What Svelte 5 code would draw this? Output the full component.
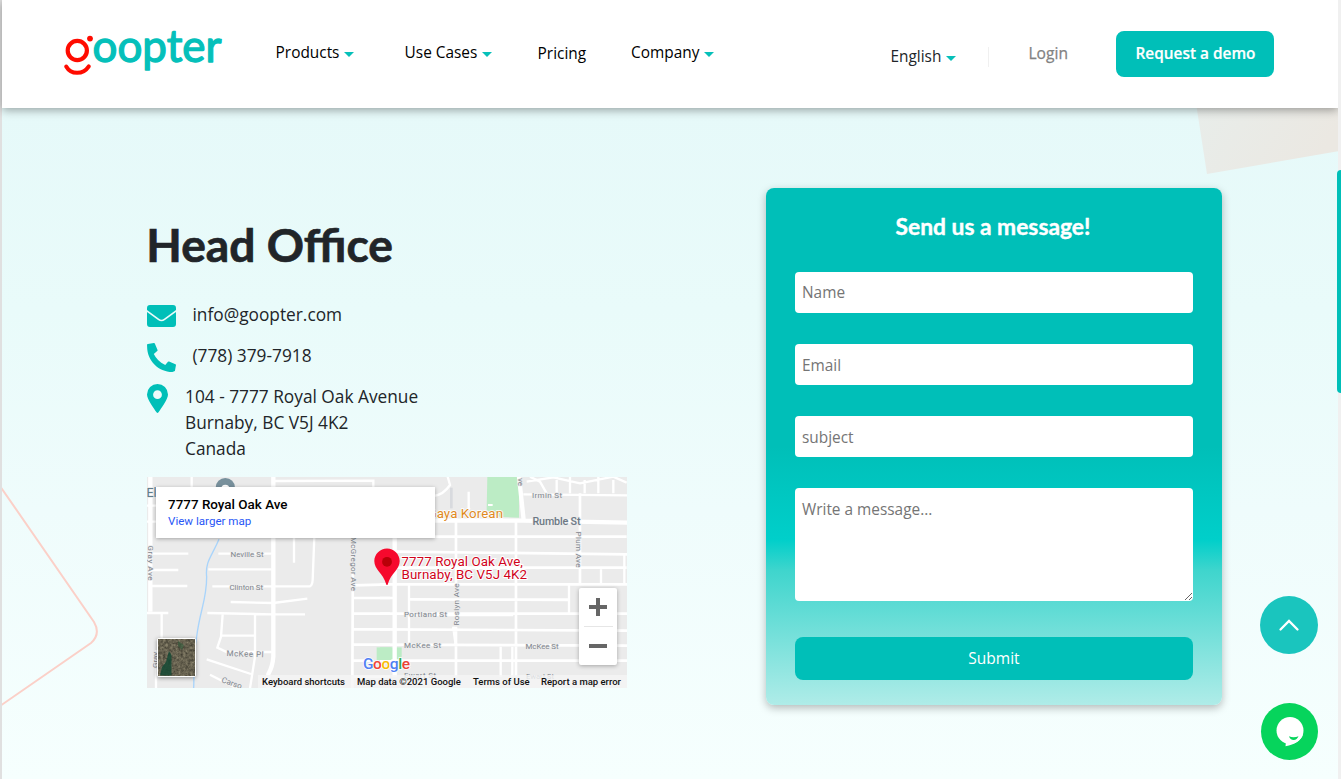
<script>
  const menu = [
    { label: 'Products', caret: true, width: 129 },
    { label: 'Use Cases', caret: true, width: 133 },
    { label: 'Pricing', caret: false, width: 93.5 },
    { label: 'Company', caret: true, width: 90 }
  ];
  const fields = ['Name', 'Email', 'subject'];
</script>

<div class="page">
  <header>
    <svg class="logo" width="160" height="46" viewBox="0 0 160 46" role="img" aria-label="goopter">
      <g fill="none" stroke="#ff0b00" stroke-linecap="round">
        <circle cx="14.3" cy="20.5" r="9.6" stroke-width="4.2" />
        <path d="M3.200 36.500C8 45 20 45 25.800 36.300" stroke-width="4" />
      </g>
      <circle cx="27" cy="8.6" r="2.9" fill="#ff0b00" />
      <text x="29.5" y="31.800" textLength="129" lengthAdjust="spacingAndGlyphs">oopter</text>
    </svg>
    <nav>
      {#each menu as item}
        <a class:plain={!item.caret} style="width:{item.width}px">{item.label}{#if item.caret}<i class="caret"></i>{/if}</a>
      {/each}
    </nav>
    <span class="lang">English<i class="caret"></i></span>
    <span class="rule"></span>
    <span class="login">Login</span>
    <button class="demo">Request a demo</button>
  </header>

  <main>
    <svg class="decor" width="1336" height="671" viewBox="2 108 1336 671">
      <defs>
        <linearGradient id="sq" x1="0" y1="0" x2="1" y2="0.3">
          <stop offset="0" stop-color="#e8edea" /><stop offset="1" stop-color="#ebe8e2" />
        </linearGradient>
      </defs>
      <path d="M1195.500 100L1207 174L1340 151V100Z" fill="url(#sq)" />
      <path d="M0 486L94 622Q101 634 91 643L0 706" fill="none" stroke="#fbd0c8" stroke-width="2" />
    </svg>

    <section class="office">
      <h1>Head Office</h1>
      <div class="row">
        <svg width="29" height="22" viewBox="0 0 29 22"><path fill="#00bfb8" d="M3 0H26A3 3 0 0 1 29 3V5L17 13.800Q14.500 15.500 12 13.800L0 5V3A3 3 0 0 1 3 0ZM0 7L11 15Q14.500 17.500 18 15L29 7V19A3 3 0 0 1 26 22H3A3 3 0 0 1 0 19Z" /></svg>
        <span>info@goopter.com</span>
      </div>
      <div class="row phone">
        <svg width="29" height="29" viewBox="0 0 512 512"><path fill="#00bfb8" d="M493 495L471 504Q460 510 448 510C200 510 2 310 2 64Q2 50 0 30Q2 20 16 16L120 0Q133-1 138 10L186 122Q190 134 180 143L120 192C155 265 220 340 322 390L370 331Q378 322 390 326L502 374Q514 380 511 392L493 495Z" /></svg>
        <span>(778) 379-7918</span>
      </div>
      <div class="row place">
        <svg width="21" height="29" viewBox="0 0 21 29"><path fill="#00bfb8" fill-rule="evenodd" d="M10.500 0A10.500 10.500 0 0 1 21 10.500C21 15.500 14 24.500 11.500 28.300Q10.500 29.500 9.500 28.300C7 24.500 0 15.500 0 10.500A10.500 10.500 0 0 1 10.500 0ZM10.500 6.300A4.400 4.400 0 1 0 10.500 15.100A4.400 4.400 0 1 0 10.500 6.300Z" /></svg>
        <address>104 - 7777 Royal Oak Avenue<br />Burnaby, BC V5J 4K2<br />Canada</address>
      </div>

      <div class="map">
        <svg class="tiles" width="480" height="211" viewBox="0 0 480 211">
          <rect width="480" height="211" fill="#ebebeb" />
          <g transform="translate(-7 -7) scale(.33333)">
            <g class="road">
              <path class="main" d="M400 20V560Q398 590 385 612V655" />
              <path class="main" d="M31 20V425" />
              <path d="M155 20V60M20 107H60M20 155H60M35 251H145M35 300H115M35 348H142M20 429H85M65 429V510M48 540V655" />
              <path d="M235 251H395M205 298H395M217 349H510Q517 345 518 330L523 200M272 396L400 399L502 386M202 429L395 433H495M248 433L243 500L232 533L260 546H395M245 497H343M345 435V560L330 655M200 568L333 612M210 614L290 655M462 200V278M400 33L700 32V60" />
              <path class="mid" d="M639 190L637 655M640 346L750 343M640 384H750M640 431H750M640 478H750M640 524H750M640 572H700M640 620H750" />
            </g>
            <path d="M237 208C215 260 195 275 200 320C200 390 180 420 170 500C160 550 163 600 161 655" fill="none" stroke="#a9d4fb" stroke-width="4" />
            <rect x="710" y="532" width="75" height="40" fill="#bcecc5" />
            <circle cx="256" cy="53" r="29" fill="#78909c" /><circle cx="256" cy="56" r="12" fill="#fff" />
          </g>
          <g transform="translate(233 -7) scale(.33333)">
            <path d="M322 20H417V143L360 141L320 120Z" fill="#bcecc5" />
            <rect x="324" y="102" width="14" height="6" fill="#fff" />
            <g class="road">
              <path class="main" d="M44 195V620" />
              <path class="main" d="M417 20L431 150M160 152H430L745 158" />
              <path class="mid" d="M0 200H445M45 245L745 253M45 293H740M0 343H745M0 384H45M90 388L565 390M0 431H745M90 389H565M0 478L745 482M0 524L745 527M0 572H745M228 155V340M228 470V620M408 155V620M600 70V340M430 200H740M220 470L228 530" />
              <path d="M87 343V520M567 343V435M362 530V620M397 530V620M663 298V343M733 253V340M90 435H400M160 78Q190 75 210 45L203 20M266 65V120M430 73L745 76M440 35L520 22L600 40L700 20L740 38M450 20L480 35L500 70M530 20V73M570 20V70M614 30V70M655 20V70M700 30V70" />
            </g>
            <path d="M214 53V115" stroke="#d8dade" stroke-width="8" />
            <rect x="0" y="532" width="34" height="38" fill="#bcecc5" />
          </g>
          <g class="street">
            <text x="83.500" y="79.500" textLength="33">Neville St</text>
            <text x="82.500" y="112.500" textLength="33.500">Clinton St</text>
            <text x="79.500" y="179" textLength="37" transform="rotate(2 80 178)">McKee Pl</text>
            <text x="74" y="205" transform="rotate(20 74 205)">Carso</text>
            <text x="257" y="140" textLength="43">Portland St</text>
            <text x="257" y="171" textLength="37">McKee St</text>
            <text x="378.500" y="171.500" textLength="33">McKee St</text>
            <text x="257" y="201" textLength="32">Ewart St</text>
            <text x="379" y="202" textLength="28">Ewart St</text>
            <text x="385" y="21" textLength="30">Irmin St</text>
            <text transform="translate(.5 68.500) rotate(90)" textLength="35">Gray Ave</text>
            <text transform="translate(204 60) rotate(90)" textLength="54">McGregor Ave</text>
            <text transform="translate(311.500 148.500) rotate(-90)" textLength="42">Roslyn Ave</text>
            <text transform="translate(429 54.500) rotate(90)" textLength="36">Plum Ave</text>
            <text transform="translate(371 1) rotate(90)">ve</text>
            <text transform="translate(10.500 191) rotate(-90)">Gray</text>
            <text class="big" x="385.500" y="47.500" textLength="48">Rumble St</text>
            <text class="el" x="-.5" y="19.500">El</text>
          </g>
          <text class="food" x="280.500" y="41" textLength="75.500">Gaya Korean</text>
          <path d="M240 71.500C246.900 71.500 252.700 77.200 252.700 84C252.700 93 244 95.500 240.700 107.500Q240 108.700 239.300 107.500C236 95.500 227.300 93 227.300 84C227.300 77.200 233.100 71.500 240 71.500Z" fill="#f6092d" />
          <circle cx="240" cy="84.800" r="4.900" fill="#b90008" />
          <g class="dest"><text x="254.500" y="88.500" textLength="121.500">7777 Royal Oak Ave,</text><text x="254.500" y="102" textLength="125.500">Burnaby, BC V5J 4K2</text></g>
          <text class="google" x="216" y="191.500" textLength="47"><tspan fill="#5181f4">G</tspan><tspan fill="#f04438">o</tspan><tspan fill="#f9bc05">o</tspan><tspan fill="#4d80f4">g</tspan><tspan fill="#34a853">l</tspan><tspan fill="#ea4335">e</tspan></text>
        </svg>
        <div class="card"><b>7777 Royal Oak Ave</b><span>View larger map</span></div>
        <div class="zoom"><i class="plus"></i><i class="minus"></i></div>
        <svg class="sat" width="41" height="41" viewBox="0 0 41 41">
          <defs>
            <filter id="grain" x="0" y="0" width="1" height="1" color-interpolation-filters="sRGB">
              <feTurbulence type="fractalNoise" baseFrequency=".4" numOctaves="3" seed="4" />
              <feColorMatrix values=".4 0 0 0 .2  .38 0 0 0 .19  .32 0 0 0 .15  0 0 0 0 1" />
            </filter>
          </defs>
          <rect x="1" y="1" width="39" height="39" rx="2" fill="#fff" />
          <rect x="2.500" y="2.500" width="36" height="36" filter="url(#grain)" />
          <path d="M13 14L15.500 18V38.500H4L6 30L10 25Z" fill="#154a35" opacity=".85" />
          <path d="M22 4L28 8L26 13L22 9Z" fill="#2a5535" opacity=".6" />
        </svg>
        <div class="legal">
          <span style="width:87px">Keyboard shortcuts</span><span style="width:108px">Map data ©2021 Google</span><span style="width:60px">Terms of Use</span><span style="width:81px">Report a map error</span>
        </div>
      </div>
    </section>

    <form class="panel">
      <h2>Send us a message!</h2>
      {#each fields as name}
        <input placeholder={name} />
      {/each}
      <textarea placeholder="Write a message..."></textarea>
      <button type="button">Submit</button>
    </form>
  </main>

  <div class="track"><div class="thumb"></div></div>
  <div class="round up">
    <svg width="22" height="14" viewBox="0 0 22 14"><path d="M2.500 11.500L11 3L19.500 11.500" fill="none" stroke="#fff" stroke-width="2.300" stroke-linecap="round" /></svg>
  </div>
  <div class="round chat">
    <svg width="30" height="31" viewBox="0 0 30 31"><circle cx="15" cy="14.500" r="13.500" fill="#fff" /><path fill="#fff" d="M10 24L10.800 27L10.500 30.300C20 28.500 26.500 24 28 18Z" /><path fill="#06d45c" d="M14 20.300Q18.500 22.200 23.500 20.300Q22 24 18.700 24Q15 24 14 20.300Z" /></svg>
  </div>
</div>

<style>
  :global(body) { margin: 0; overflow: hidden; }
  * { box-sizing: border-box; }
  .page { position: relative; width: 1341px; height: 779px; padding: 0 3px 0 2px; overflow: hidden; background: #e0e0e0; font-family: 'Open Sans', sans-serif; color: #212529; display: flex; flex-direction: column; }
  header { position: relative; z-index: 2; height: 108px; flex: none; background: #fff; display: flex; align-items: flex-start; padding-left: 61px; box-shadow: 0 2px 9px rgba(0, 0, 0, .36); font-size: 15.4px; line-height: 22px; white-space: nowrap; }
  .logo { margin-top: 30px; overflow: visible; flex: none; }
  .logo text { font: 400 43.500px Lato, sans-serif; fill: #05c0ba; stroke: #05c0ba; stroke-width: 1.300px; stroke-linejoin: round; }
  nav { display: flex; margin: 42px 0 0 52.600px; color: #000; }
  nav a { flex: none; }
  nav a.plain { padding-top: 1px; }
  .caret { display: inline-block; border: 5px solid transparent; border-top: 5px solid #06c0b9; border-bottom: 0; margin-left: 5px; vertical-align: 1.500px; }
  .lang { margin: 46px 0 0 169.400px; width: 98px; flex: none; }
  .rule { width: 1px; height: 20px; margin-top: 47px; background: #f0f0f0; }
  .login { margin: 42px 0 0 39px; width: 88px; color: #828282; font-weight: 500; font-size: 15.600px; flex: none; -webkit-text-stroke: .25px #828282; }
  .demo { margin-top: 31px; width: 158px; height: 46px; border: 0; border-radius: 8px; background: #00bfb8; color: #fff; font: 600 15.400px 'Open Sans', sans-serif; padding: 0 0 2px; flex: none; -webkit-text-stroke: .2px #fff; }
  main { position: relative; flex: 1; background: linear-gradient(#e6f9f9, #e9fbfa 30%, #effcfc 60%, #f6fffe); display: flex; align-items: flex-start; padding-left: 145px; }
  .decor { position: absolute; left: 0; top: 0; }
  .office { position: relative; width: 480px; padding-top: 107px; font-size: 17.3px; line-height: 26px; }
  h1 { margin: 0 0 30px -.7px; font: 700 46.200px/58px Lato, sans-serif; -webkit-text-stroke: .7px #212529; white-space: nowrap; }
  .row { display: flex; gap: 16.500px; height: 26px; margin-bottom: 15px; align-items: flex-start; white-space: nowrap; }
  .row svg { flex: none; margin-top: 2px; }
  .row span { margin-top: -1px; }
  .row.phone svg { margin-top: -1px; }
  .row.place { height: 78px; gap: 17px; margin-bottom: 14px; }
  .row.place svg { margin-top: -1px; }
  address { font-style: normal; margin-top: -1px; }
  .map { position: relative; height: 211px; overflow: hidden; font-family: Roboto, sans-serif; margin-top: 1px; }
  .tiles { display: block; }
  .road { fill: none; stroke: #fff; stroke-width: 7px; }
  .road .main { stroke-width: 13px; }
  .road .mid { stroke-width: 8px; }
  .street { font: 400 8px Roboto, sans-serif; fill: #7f868e; stroke: #ebebeb; stroke-width: 1.300px; paint-order: stroke; }
  .street .big { font-size: 10.800px; font-weight: 500; fill: #6d7985; }
  .street .el { font-size: 12.500px; font-weight: 400; fill: #607d8b; }
  .food { font: 400 13.300px Roboto, sans-serif; fill: #e08a1e; stroke: #fff; stroke-width: 1.500px; paint-order: stroke; }
  .dest { font: 400 13.400px Roboto, sans-serif; fill: #d0021b; stroke: #fff; stroke-width: 2px; paint-order: stroke; }
  .google { font: 500 15.500px Roboto, sans-serif; stroke: #fff; stroke-width: 1.500px; paint-order: stroke; }
  .card { position: absolute; left: 9px; top: 10px; width: 279px; height: 51px; padding: 9px 12px; background: #fff; box-shadow: 0 1px 4px rgba(0, 0, 0, .3); display: flex; flex-direction: column; line-height: 17px; }
  .card b { font-size: 13.450px; font-weight: 500; color: #000; }
  .card span { font-size: 11.600px; color: #2856f6; }
  .zoom { position: absolute; left: 432px; top: 111px; width: 38px; height: 77px; border-radius: 2px; background: linear-gradient(#e6e6e6, #e6e6e6) 50% 38px / 29px 1px no-repeat #fff; box-shadow: 0 1px 4px rgba(0, 0, 0, .3); display: flex; flex-direction: column; align-items: center; }
  .plus { width: 18px; height: 18px; margin-top: 10px; background: linear-gradient(#666, #666) 50% 50% / 18px 4px no-repeat, linear-gradient(#666, #666) 50% 50% / 4px 18px no-repeat; }
  .minus { width: 18px; height: 4px; margin-top: 28px; background: #666; }
  .sat { position: absolute; left: 9px; top: 160px; filter: drop-shadow(0 1px 2px rgba(0, 0, 0, .4)); }
  .legal { position: absolute; right: 0; bottom: 0; height: 13px; display: flex; gap: 8px; padding: 0 5px 0 4px; background: rgba(245, 245, 245, .8); font-size: 9.500px; font-weight: 500; line-height: 13px; color: #111; white-space: nowrap; }
  .panel { position: relative; margin: 80px 0 0 139px; width: 456px; height: 517px; padding: 23px 29px; border-radius: 8px; background: linear-gradient(#00bfb8 0, #00bfb8 50%, #00cfca 68%, #3fd5cd 74%, #afece8 100%); box-shadow: 0 3px 9px rgba(0, 0, 0, .27); display: flex; flex-direction: column; }
  h2 { margin: 0 0 30px -2px; font: 700 22.800px/31px Lato, sans-serif; color: #fff; text-align: center; -webkit-text-stroke: .4px #fff; }
  input, textarea { display: block; width: 100%; border: 0; border-radius: 4px; background: #fff; font: 15.400px/22px 'Open Sans', sans-serif; margin: 0 0 31px; padding: 2px 7px 0; flex: none; }
  input { height: 41px; }
  input:first-of-type { padding-top: 0; }
  input::placeholder, textarea::placeholder { color: #757575; }
  textarea { height: 113px; padding: 11px 7px; margin-bottom: 36px; resize: both; }
  .panel button { height: 43px; border: 0; border-radius: 8px; background: #00bfb8; color: #fff; font: 15.500px 'Open Sans', sans-serif; padding: 0 0 2px; flex: none; }
  .track { position: absolute; right: 0; top: 0; width: 3px; height: 779px; background: #f0f0f0; z-index: 3; padding-top: 170px; }
  .thumb { width: 4px; height: 223px; margin-left: -1px; background: #00bfb8; border-radius: 4px 0 0 4px; }
  .round { position: absolute; border-radius: 50%; display: flex; align-items: center; justify-content: center; z-index: 3; }
  .up { left: 1260px; top: 596px; width: 58px; height: 58px; background: #1ac5be; }
  .chat { left: 1261px; top: 703px; width: 57px; height: 57px; background: #06d45c; }
</style>
